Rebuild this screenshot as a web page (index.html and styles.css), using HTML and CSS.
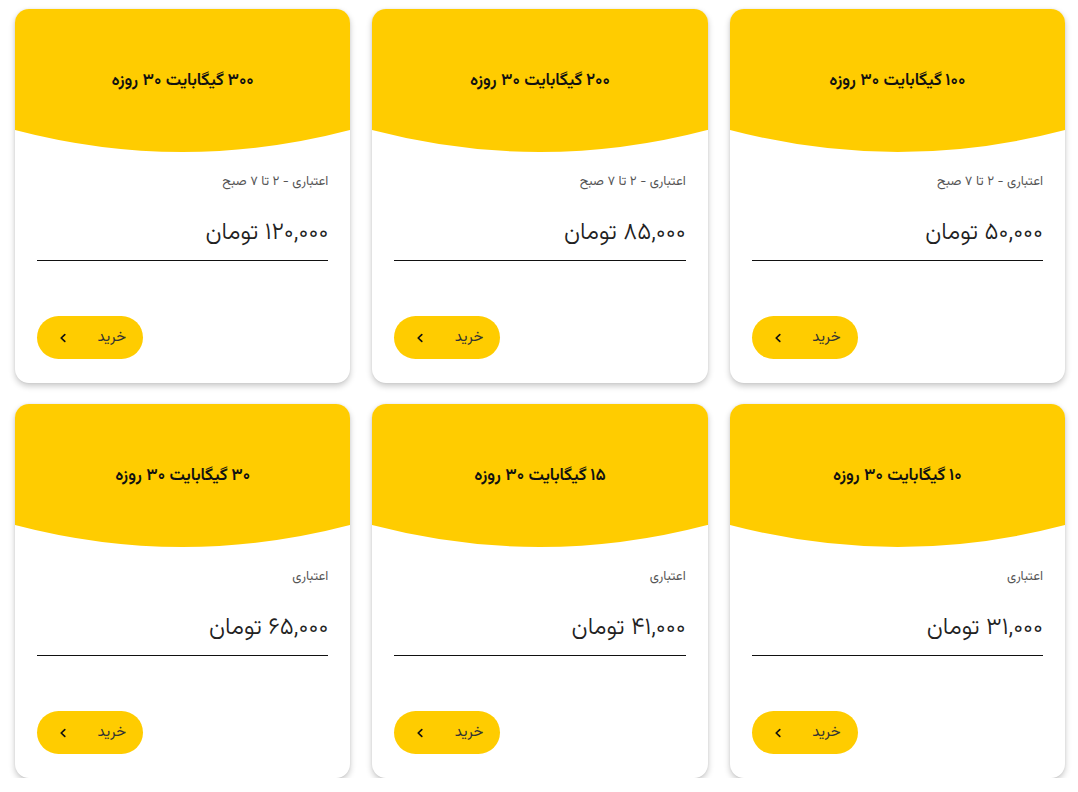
FILE: index.html
```html
<!DOCTYPE html>
<html lang="fa" dir="rtl">
<head>
<meta charset="utf-8">
<title>بسته‌ها</title>
<link rel="stylesheet" href="styles.css">
</head>
<body>
<main class="grid">
  <article class="card">
    <header class="card-head"><h2 class="title">۱۰۰&thinsp;گیگابایت ۳۰ روزه</h2></header>
    <svg class="wave" viewBox="0 0 100 22" preserveAspectRatio="none"><path d="M0 0H100V0Q50 44 0 0Z" fill="#FFCC00"/></svg>
    <div class="card-body">
      <p class="note">اعتباری - ۲ تا ۷ صبح</p>
      <p class="price">۵۰,۰۰۰ تومان</p>
      <button class="buy"><span>خرید</span><svg class="chev" viewBox="0 0 10 10"><path d="M6.5 2.2L3.5 5l3 2.8" fill="none" stroke="#111" stroke-width="1.4" stroke-linecap="round" stroke-linejoin="round"/></svg></button>
    </div>
  </article>
  <article class="card">
    <header class="card-head"><h2 class="title">۲۰۰&thinsp;گیگابایت ۳۰ روزه</h2></header>
    <svg class="wave" viewBox="0 0 100 22" preserveAspectRatio="none"><path d="M0 0H100V0Q50 44 0 0Z" fill="#FFCC00"/></svg>
    <div class="card-body">
      <p class="note">اعتباری - ۲ تا ۷ صبح</p>
      <p class="price">۸۵,۰۰۰ تومان</p>
      <button class="buy"><span>خرید</span><svg class="chev" viewBox="0 0 10 10"><path d="M6.5 2.2L3.5 5l3 2.8" fill="none" stroke="#111" stroke-width="1.4" stroke-linecap="round" stroke-linejoin="round"/></svg></button>
    </div>
  </article>
  <article class="card">
    <header class="card-head"><h2 class="title">۳۰۰&thinsp;گیگابایت ۳۰ روزه</h2></header>
    <svg class="wave" viewBox="0 0 100 22" preserveAspectRatio="none"><path d="M0 0H100V0Q50 44 0 0Z" fill="#FFCC00"/></svg>
    <div class="card-body">
      <p class="note">اعتباری - ۲ تا ۷ صبح</p>
      <p class="price">۱۲۰,۰۰۰ تومان</p>
      <button class="buy"><span>خرید</span><svg class="chev" viewBox="0 0 10 10"><path d="M6.5 2.2L3.5 5l3 2.8" fill="none" stroke="#111" stroke-width="1.4" stroke-linecap="round" stroke-linejoin="round"/></svg></button>
    </div>
  </article>
  <article class="card">
    <header class="card-head"><h2 class="title">۱۰&thinsp;گیگابایت ۳۰ روزه</h2></header>
    <svg class="wave" viewBox="0 0 100 22" preserveAspectRatio="none"><path d="M0 0H100V0Q50 44 0 0Z" fill="#FFCC00"/></svg>
    <div class="card-body">
      <p class="note">اعتباری</p>
      <p class="price">۳۱,۰۰۰ تومان</p>
      <button class="buy"><span>خرید</span><svg class="chev" viewBox="0 0 10 10"><path d="M6.5 2.2L3.5 5l3 2.8" fill="none" stroke="#111" stroke-width="1.4" stroke-linecap="round" stroke-linejoin="round"/></svg></button>
    </div>
  </article>
  <article class="card">
    <header class="card-head"><h2 class="title">۱۵&thinsp;گیگابایت ۳۰ روزه</h2></header>
    <svg class="wave" viewBox="0 0 100 22" preserveAspectRatio="none"><path d="M0 0H100V0Q50 44 0 0Z" fill="#FFCC00"/></svg>
    <div class="card-body">
      <p class="note">اعتباری</p>
      <p class="price">۴۱,۰۰۰ تومان</p>
      <button class="buy"><span>خرید</span><svg class="chev" viewBox="0 0 10 10"><path d="M6.5 2.2L3.5 5l3 2.8" fill="none" stroke="#111" stroke-width="1.4" stroke-linecap="round" stroke-linejoin="round"/></svg></button>
    </div>
  </article>
  <article class="card">
    <header class="card-head"><h2 class="title">۳۰&thinsp;گیگابایت ۳۰ روزه</h2></header>
    <svg class="wave" viewBox="0 0 100 22" preserveAspectRatio="none"><path d="M0 0H100V0Q50 44 0 0Z" fill="#FFCC00"/></svg>
    <div class="card-body">
      <p class="note">اعتباری</p>
      <p class="price">۶۵,۰۰۰ تومان</p>
      <button class="buy"><span>خرید</span><svg class="chev" viewBox="0 0 10 10"><path d="M6.5 2.2L3.5 5l3 2.8" fill="none" stroke="#111" stroke-width="1.4" stroke-linecap="round" stroke-linejoin="round"/></svg></button>
    </div>
  </article>
</main>
</body>
</html>
```

FILE: styles.css
```css
html, body {
  margin: 0;
  background: #ffffff;
}
body {
  font-family: "Vazirmatn", "Vazir", "Noto Sans Arabic", "DejaVu Sans", sans-serif;
  color: #222;
}
.grid {
  display: grid;
  grid-template-columns: repeat(3, 1fr);
  column-gap: 22px;
  row-gap: 21px;
  padding: 9px 13px 0 15px;
}
.card {
  background: #fff;
  border-radius: 14px;
  overflow: hidden;
  box-shadow: 0 3px 6px rgba(0, 0, 0, 0.22), 0 0 2px rgba(0, 0, 0, 0.08);
  display: flex;
  flex-direction: column;
}
.card-head {
  background: #FFCC00;
  height: 121px;
  padding-top: 22px;
  box-sizing: border-box;
  display: flex;
  align-items: center;
  justify-content: center;
}
.title {
  margin: 0;
  font-size: 17px;
  font-weight: 600;
  color: #111;
}
.wave {
  display: block;
  width: 100%;
  height: 22px;
}
.card-body {
  padding: 0 22px 24px;
  display: flex;
  flex-direction: column;
}
.note {
  margin: 22px 0 0;
  font-size: 13px;
  line-height: 16px;
  color: #555;
}
.price {
  margin: 26px 0 0;
  padding-bottom: 10px;
  font-size: 24px;
  font-weight: 300;
  line-height: 34px;
  color: #222;
  border-bottom: 1px solid #111;
}
.buy {
  align-self: flex-end;
  margin-top: 55px;
  width: 106px;
  height: 43px;
  border: none;
  border-radius: 22px;
  background: #FFCC00;
  display: flex;
  align-items: center;
  justify-content: space-between;
  padding: 0 17px 0 20px;
  font-family: inherit;
  font-size: 15px;
  color: #333;
  cursor: pointer;
}
.chev {
  width: 12px;
  height: 12px;
}
```
